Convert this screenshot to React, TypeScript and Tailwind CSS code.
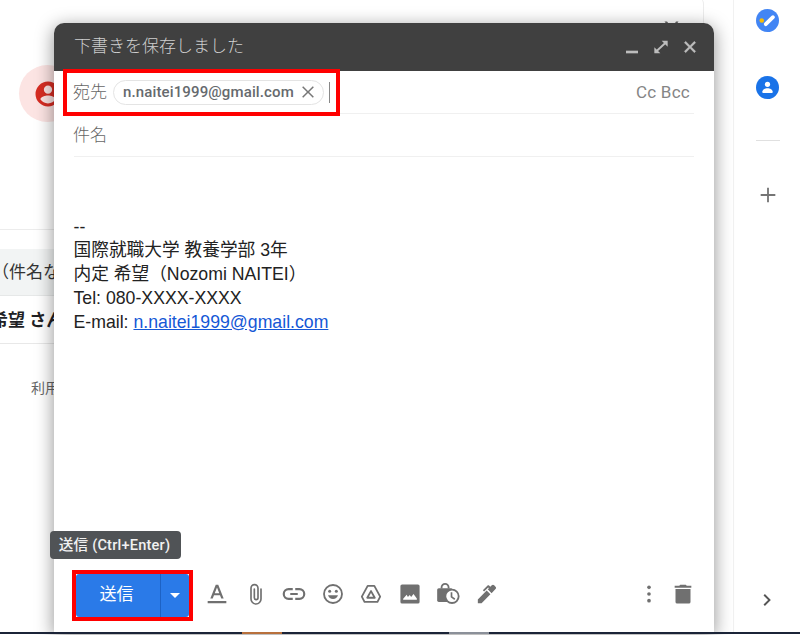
import type { ReactNode } from "react";

const SANS = "font-['Roboto','Noto_Sans_CJK_JP',sans-serif]";

function Icon({ className, children }: { className: string; children: ReactNode }) {
  return (
    <svg viewBox="0 0 24 24" fill="currentColor" className={"shrink-0 " + className}>
      {children}
    </svg>
  );
}

function MailList() {
  return (
    <div className="relative h-full w-[704px] shrink-0 overflow-hidden">
      <div className="h-[60px] w-full -translate-y-1 rounded-tr-lg border-r border-[#ececec]" />
      <Icon className="absolute top-[20px] left-[660px] size-6 text-[#666]">
        <path d="M4.500 1.500h2.500L12 8l4-6.500h2.500L12 11z" />
      </Icon>
      <div className="mt-[5px] ml-[19px] flex h-[57px] w-[57px] items-center justify-center rounded-full bg-[#fce4e3] text-[#d62c22]">
        <Icon className="size-[30px]">
          <path d="M12 2a10 10 0 1 0 0 20 10 10 0 0 0 0-20zm0 3.2a3.3 3.3 0 1 1 0 6.6 3.3 3.3 0 0 1 0-6.6zm0 14.3a7.3 7.3 0 0 1-6.1-3.3c.1-2 4-3.1 6.1-3.1s6 1.1 6.1 3.1a7.3 7.3 0 0 1-6.1 3.3z" />
        </Icon>
      </div>
      <div className="mt-[107px] h-[20px] border-t border-[#ececec]" />
      <div className="flex h-[47px] items-center border-b border-[#e6e8e8] bg-[#f2f4f4] text-[17px] whitespace-nowrap text-[#333]">
        <span className="mt-0.5 -ml-[8px]">（件名なし）</span>
      </div>
      <div className="flex h-[48px] items-center border-b border-[#e8e8e8] text-[17px] font-bold whitespace-nowrap text-[#202124]">
        <span className="mt-0.5 -ml-[9px]">希望 さん</span>
      </div>
      <div className="mt-[34px] ml-[31px] text-[14px] leading-5 text-[#666]">利用規約</div>
    </div>
  );
}

function SidePanel() {
  return (
    <div className="ml-auto flex h-full w-[67px] flex-col items-center border-l border-[#f1f1f1] bg-white pt-[9px] pl-px">
      <svg viewBox="0 0 24 24" className="size-[23px]">
        <circle cx="12" cy="12" r="12" fill="#4285f4" />
        <path d="m10.2 15.8 7.5-7.2" stroke="#fff" strokeWidth="4" strokeLinecap="round" />
        <circle cx="6" cy="12" r="2.4" fill="#fbbc04" />
      </svg>
      <svg viewBox="0 0 24 24" className="mt-[44px] size-[23px]">
        <circle cx="12" cy="12" r="12" fill="#1a73e8" />
        <circle cx="12" cy="8.7" r="2.7" fill="#fff" />
        <path d="M6.5 16.7c0-2.5 3-3.9 5.5-3.9s5.5 1.4 5.5 3.9c0 .7-.4 1.1-1 1.1h-9c-.6 0-1-.4-1-1.1z" fill="#fff" />
      </svg>
      <div className="mt-[41px] w-6 border-t border-[#e0e0e0]" />
      <Icon className="mt-[43px] size-[22px] text-[#757575]">
        <path d="M11 4h2v7h7v2h-7v7h-2v-7H4v-2h7z" />
      </Icon>
      <Icon className="mt-auto mr-0.5 mb-[21px] size-[22px] text-[#555]">
        <path d="m8.200 17 5-5-5-5 1.500-1.500 6.500 6.500-6.500 6.500z" />
      </Icon>
    </div>
  );
}

function Header() {
  return (
    <div className="flex h-12 shrink-0 items-center rounded-t-[10px] bg-[#404040] pr-[16px] pl-[20px] text-[#bdbdbd]">
      <span className="-mt-px text-[17px] font-light text-[#cfcfcf]">下書きを保存しました</span>
      <div className="ml-auto flex gap-[13px]">
        <Icon className="size-4">
          <path d="M3 17.500h18v4H3z" />
        </Icon>
        <Icon className="size-4">
          <path d="M13 2.500h9v9zM11 21.500H2v-9z" />
          <path d="M5.500 18 18.500 6" stroke="currentColor" strokeWidth="2.800" />
        </Icon>
        <Icon className="size-4">
          <path d="m5.5 3.500 6.5 6.5 6.500-6.500 2 2-6.500 6.500 6.500 6.500-2 2-6.500-6.500-6.500 6.500-2-2L10 12 3.500 5.500z" stroke="currentColor" strokeWidth=".6" />
        </Icon>
      </div>
    </div>
  );
}

function Recipients() {
  return (
    <div className="flex h-[43px] shrink-0 items-center border-b border-[#f0f0f0] text-[#777]">
      <span className="mt-0.5 -ml-px text-[17px] font-light text-[#666]">宛先</span>
      <div className="ml-[6px] flex h-[25px] items-center rounded-full border border-[#e4e4e4] pr-[7px] pl-[9px]">
        <span className="mt-px text-[15px] font-medium tracking-[0.13px] text-[#666a6e]">n.naitei1999@gmail.com</span>
        <Icon className="ml-[6px] size-4">
          <path d="M4.800 3.200 12 10.400l7.200-7.200 1.600 1.600L13.600 12l7.200 7.200-1.600 1.600L12 13.600l-7.200 7.200-1.600-1.600L10.400 12 3.200 4.800z" />
        </Icon>
      </div>
      <div className="ml-[5px] h-[21px] w-[1.5px] bg-[#888]" />
      <div className="mt-0.5 ml-auto pr-[4px] text-[17px] tracking-[0.25px] text-[#858585]">Cc Bcc</div>
    </div>
  );
}

function Signature() {
  return (
    <div className="-ml-[0.5px] pt-[58.500px] font-['Liberation_Sans','Noto_Sans_CJK_JP',sans-serif] text-[17.700px] leading-[23.800px] whitespace-nowrap text-[#222]">
      <div>--</div>
      <div>国際就職大学 教養学部 3年</div>
      <div>内定 希望（Nozomi NAITEI）</div>
      <div>Tel: 080-XXXX-XXXX</div>
      <div>
        E-mail: <span className="text-[#1558d6] underline">n.naitei1999@gmail.com</span>
      </div>
    </div>
  );
}

const TOOLS = [
  {
    id: "format",
    shape: <path d="M.8 20.500h22.400V23H.8zM10.500 1h3l6.500 16.500h-2.900l-1.500-4H8.400l-1.500 4H4zm1.500 3.200L9.300 11.100h5.400z" />,
  },
  {
    id: "attach",
    shape: (
      <path d="M18 6v12a6 6 0 0 1-12 0V5a4.200 4.200 0 0 1 8.400 0v11.500a2.200 2.200 0 0 1-4.400 0V6" fill="none" stroke="currentColor" strokeWidth="2" strokeLinecap="round" />
    ),
  },
  {
    id: "link",
    shape: (
      <path d="M10.500 6.200H5.500a5.800 5.800 0 0 0 0 11.600h5M13.500 6.200h5a5.800 5.800 0 0 1 0 11.600h-5M7.500 12h9" fill="none" stroke="currentColor" strokeWidth="2.600" />
    ),
  },
  {
    id: "emoji",
    shape: (
      <>
        <circle cx="12" cy="12" r="10.800" fill="none" stroke="currentColor" strokeWidth="2.200" />
        <circle cx="8" cy="8.800" r="1.800" />
        <circle cx="16" cy="8.800" r="1.800" />
        <path d="M6 13.500h12a6.300 6.300 0 0 1-12 0z" />
      </>
    ),
  },
  {
    id: "drive",
    shape: (
      <path d="M8 2.200h8l7 13-3.200 6.300H4.200L1 15.200zM12 8.500l-4.500 8h9z" fill="none" stroke="currentColor" strokeWidth="2.200" strokeLinejoin="round" />
    ),
  },
  {
    id: "image",
    shape: (
      <path fillRule="evenodd" d="M2.500.5h19a2 2 0 0 1 2 2v19a2 2 0 0 1-2 2h-19a2 2 0 0 1-2-2v-19a2 2 0 0 1 2-2zM3.800 19h16.400v-1.500l-4-5.500-2.800 3.500-1.700-2.200L9.500 15.500 8 12.800l-4.200 5z" />
    ),
  },
  {
    id: "confidential",
    shape: (
      <>
        <path d="M4.300 5.500V4a4.200 4.200 0 0 1 8.400 0v1.500" fill="none" stroke="currentColor" strokeWidth="2.200" />
        <path d="M1 5h15.500v16.500H1a2 2 0 0 1-2-2V7a2 2 0 0 1 2-2z" />
        <circle cx="16.800" cy="14.800" r="8" fill="#fff" stroke="currentColor" strokeWidth="2.200" />
        <path d="M16.200 9.800v5.700l4 2.800" fill="none" stroke="currentColor" strokeWidth="2" />
      </>
    ),
  },
  {
    id: "signature",
    shape: (
      <path d="M1 23v-4.500L11.600 7.900l4.500 4.500L5.500 23zM17.500 11l-4.600-4.600 1.400-1.400-.9-.9-4.900 4.900L7 7.500l5.400-5.400c.8-.8 1.600-.8 2.400 0l1.200 1.200 1.700-1.700c.9-.9 2-.9 2.900 0l1.600 1.600c.9.9.9 2 0 2.900z" />
    ),
  },
];

function Toolbar() {
  return (
    <div className="mt-auto mb-[15.500px] ml-0.5 flex shrink-0 items-center text-[#707070]">
      <div className="flex h-[43px] w-[113px] overflow-hidden rounded-[3px] bg-[#2a7ae8] text-white">
        <div className="flex w-[85px] items-center justify-center border-r border-[#1d62c4] pr-[3px] text-[17px]">送信</div>
        <div className="flex flex-1 items-center justify-center">
          <svg viewBox="0 0 10 5" className="w-[10px]" fill="currentColor">
            <path d="M0 0h10L5 5z" />
          </svg>
        </div>
      </div>
      <div className="mb-[3px] ml-[18px] flex gap-[18.500px]">
        {TOOLS.map((tool) => (
          <Icon key={tool.id} className="size-5 overflow-visible">
            {tool.shape}
          </Icon>
        ))}
      </div>
      <Icon className="mb-[3px] ml-auto size-5">
        <circle cx="12" cy="4" r="2.200" />
        <circle cx="12" cy="12" r="2.200" />
        <circle cx="12" cy="20" r="2.200" />
      </Icon>
      <Icon className="mr-px mb-[3px] ml-[14px] size-5">
        <path d="M2 2h5.500l1.200-1h6.600l1.200 1H22v2.600H2zM3 6h18v15.500a2 2 0 0 1-2 2H5a2 2 0 0 1-2-2z" />
      </Icon>
    </div>
  );
}

export default function App() {
  return (
    <div className={"relative h-[635px] w-[800px] overflow-hidden bg-white " + SANS}>
      <div className="flex h-[632px]">
        <MailList />
        <SidePanel />
      </div>

      {/* Compose window */}
      <div className="absolute top-[23px] left-[54px] flex h-[609px] w-[660px] flex-col rounded-t-[10px] bg-white shadow-[0_4px_18px_1px_rgba(0,0,0,0.4)]">
        <Header />
        <div className="flex flex-1 flex-col pr-5 pl-5">
          <Recipients />
          <div className="flex h-[43px] shrink-0 items-center border-b border-[#f0f0f0] pt-0.5 text-[17px] font-light text-[#666]">
            <span className="-ml-px">件名</span>
          </div>
          <Signature />
          <Toolbar />
        </div>
      </div>

      {/* Highlights */}
      <div className="absolute top-[69px] left-[63px] h-[47px] w-[277px] border-4 border-[#f00]" />
      <div className="absolute top-[570px] left-[72px] h-[51px] w-[121px] border-4 border-[#f00]" />

      <div className="absolute top-[531px] left-[50px] flex h-[28px] w-[131px] items-center justify-center rounded bg-[#505356] pt-px pr-0.5 text-[14.600px] font-medium tracking-[0.2px] whitespace-nowrap text-[#f1f1f1]">
        送信 (Ctrl+Enter)
      </div>

      {/* Taskbar edge */}
      <div className="absolute top-[632px] left-0 flex h-[2px] w-full bg-[#1b2438]">
        <div className="ml-[242px] w-10 bg-[#b8703c]" />
        <div className="ml-[167px] w-10 bg-[#8b9099]" />
      </div>
    </div>
  );
}
